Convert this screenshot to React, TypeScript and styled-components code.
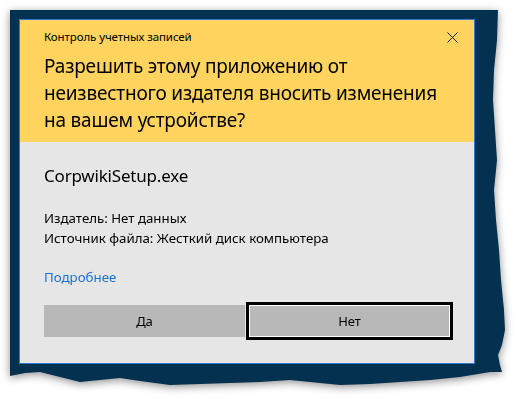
import React from 'react';
import styled, { createGlobalStyle } from 'styled-components';

const GlobalStyle = createGlobalStyle`
  html, body {
    margin: 0;
    padding: 0;
    background: #ffffff;
  }
  body {
    font-family: "Noto Sans", "Open Sans", sans-serif;
    color: #000000;
  }
`;

const Page = styled.div`
  width: 517px;
  height: 399px;
  padding: 10px 0 0 10px;
  box-sizing: border-box;
  overflow: hidden;
`;

const ShadowWrap = styled.div`
  width: 498px;
  filter: drop-shadow(0 2px 4px rgba(0, 0, 0, 0.45));
`;

// torn-paper edge on the right and bottom
const Frame = styled.div`
  width: 498px;
  height: 376px;
  box-sizing: border-box;
  padding: 9px 0 0 9px;
  background: #03314f;
  clip-path: polygon(
    0px 0px,
    488px 0px,
    487px 30px,
    484px 60px,
    483px 90px,
    485px 120px,
    487px 150px,
    484px 180px,
    486px 210px,
    489px 240px,
    491px 270px,
    494px 300px,
    495px 320px,
    492px 335px,
    488px 345px,
    490px 355px,
    492px 362px,
    480px 362px,
    450px 367px,
    420px 370px,
    390px 372px,
    360px 374px,
    330px 375px,
    300px 372px,
    280px 370px,
    250px 372px,
    220px 373px,
    190px 374px,
    160px 375px,
    130px 371px,
    110px 368px,
    90px 370px,
    70px 372px,
    50px 367px,
    30px 362px,
    15px 363px,
    0px 366px
  );
`;

const Dialog = styled.div`
  width: 456px;
  box-sizing: border-box;
  border: 1px solid #2a7ad0;
  background: #e6e6e6;
`;

const Header = styled.div`
  background: #fed35e;
  padding: 9px 0 8px 24px;
`;

const TitleRow = styled.div`
  display: flex;
  align-items: center;
  justify-content: space-between;
  height: 16px;
`;

const Caption = styled.div`
  font-size: 11.5px;
  line-height: 16px;
  letter-spacing: -0.1px;
`;

const CloseButton = styled.button`
  display: flex;
  align-items: center;
  justify-content: center;
  width: 30px;
  height: 16px;
  margin-right: 7px;
  padding: 0;
  border: none;
  background: transparent;
`;

const Question = styled.div`
  margin-top: 8px;
  padding-right: 20px;
  font-size: 19px;
  line-height: 27px;
  letter-spacing: -0.2px;
`;

const Body = styled.div`
  padding: 22px 24px 26px 24px;
`;

const FileName = styled.div`
  font-size: 17px;
  line-height: 24px;
  letter-spacing: -0.2px;
`;

const Details = styled.div`
  margin-top: 20px;
`;

const DetailLine = styled.div`
  font-size: 13.3px;
  line-height: 20px;
`;

const MoreLink = styled.a`
  display: block;
  margin-top: 19px;
  font-size: 13.3px;
  line-height: 20px;
  color: #1773d1;
  text-decoration: none;
`;

const Buttons = styled.div`
  display: grid;
  grid-template-columns: 201px 201px;
  gap: 4px;
  margin-top: 18px;
`;

const DialogButton = styled.button<{ $focused?: boolean }>`
  height: 32px;
  border: none;
  background: #b8b8b8;
  font-family: "Noto Sans", "Open Sans", sans-serif;
  font-size: 13px;
  color: #000000;
  box-shadow: ${(p) => (p.$focused ? 'inset 0 0 0 1px #ffffff' : 'none')};
  outline: ${(p) => (p.$focused ? '3px solid #000000' : 'none')};
`;

const CloseIcon = () => (
  <svg width="11" height="11" viewBox="0 0 11 11">
    <path d="M0.5 0.5 L10.5 10.5 M10.5 0.5 L0.5 10.5" stroke="#1a1a1a" strokeWidth="1" fill="none" />
  </svg>
);

export default function App() {
  return (
    <>
      <GlobalStyle />
      <Page>
        <ShadowWrap>
          <Frame>
            <Dialog>
              <Header>
                <TitleRow>
                  <Caption>Контроль учетных записей</Caption>
                  <CloseButton aria-label="Закрыть">
                    <CloseIcon />
                  </CloseButton>
                </TitleRow>
                <Question>
                  Разрешить этому приложению от неизвестного издателя вносить изменения на вашем устройстве?
                </Question>
              </Header>
              <Body>
                <FileName>CorpwikiSetup.exe</FileName>
                <Details>
                  <DetailLine>Издатель: Нет данных</DetailLine>
                  <DetailLine>Источник файла: Жесткий диск компьютера</DetailLine>
                </Details>
                <MoreLink href="#">Подробнее</MoreLink>
                <Buttons>
                  <DialogButton>Да</DialogButton>
                  <DialogButton $focused>Нет</DialogButton>
                </Buttons>
              </Body>
            </Dialog>
          </Frame>
        </ShadowWrap>
      </Page>
    </>
  );
}
